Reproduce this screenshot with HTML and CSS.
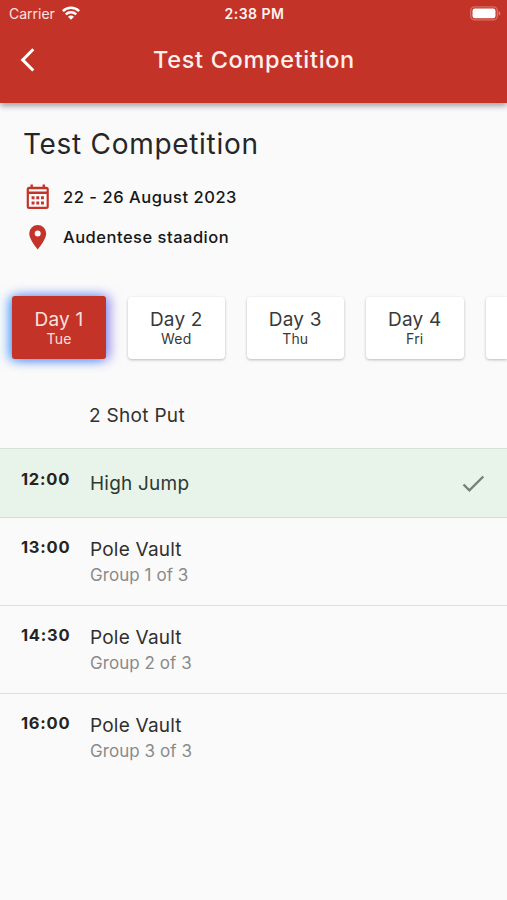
FILE: index.html
```html
<!DOCTYPE html>
<html lang="en">
<head>
<meta charset="utf-8">
<title>Test Competition</title>
<link rel="stylesheet" href="styles.css">
</head>
<body>
<header class="app-bar">
  <div class="status">
    <div class="carrier">
      <span>Carrier</span>
      <svg class="wifi" width="18" height="14" viewBox="0 0 18 14" fill="none" stroke="#fff" stroke-width="2.5">
        <path d="M.9 5.200a11.500 11.500 0 0 1 16.200 0"/>
        <path d="M3.800 8.400a7.500 7.500 0 0 1 10.400 0"/>
        <path d="M9 13.800 6 10.700a4.200 4.200 0 0 1 6 0z" fill="#fff" stroke="none"/>
      </svg>
    </div>
    <span class="clock">2:38 PM</span>
    <svg class="battery" width="31" height="15" viewBox="0 0 31 15">
      <rect x=".7" y=".9" width="26.600" height="13" rx="4" fill="none" stroke="#fff" stroke-opacity=".3" stroke-width="1.400"/>
      <rect x="2.500" y="2.600" width="23" height="9.600" rx="2.200" fill="#fff"/>
      <path d="M28.700 5v4.600c1-.4 1.600-1.300 1.600-2.300S29.700 5.400 28.700 5z" fill="#fff" fill-opacity=".4"/>
    </svg>
  </div>
  <div class="nav">
    <svg class="back" width="16" height="26" viewBox="0 0 16 26" fill="none" stroke="#fff" stroke-width="3"><path d="M14.300 2.300 3.700 12.900 14.300 23.500"/></svg>
    <h1 class="nav-title">Test Competition</h1>
  </div>
</header>
<main>
  <section class="info">
    <h2 class="title">Test Competition</h2>
    <div class="fact">
      <svg width="24" height="26" viewBox="0 0 24 26" fill="#c33329">
        <path fill-rule="evenodd" d="M4.500.5h2.400v2.300h9.700V.5H19v2.300h1.300a2.500 2.500 0 0 1 2.500 2.500v17.200a2.500 2.500 0 0 1-2.500 2.500H3.200a2.500 2.500 0 0 1-2.500-2.500V5.300a2.500 2.500 0 0 1 2.500-2.500h1.300zM2.900 5.200v2.400h17.700V5.200zM2.900 10v12.800h17.700V10z"/>
        <path d="M5.600 12.300h2.900v2.900H5.600zM10.300 12.300h2.900v2.900h-2.900zM15 12.300h2.900v2.900H15zM5.600 17.500h2.900v2.900H5.600zM10.300 17.500h2.900v2.900h-2.900zM15 17.500h2.900v2.900H15z"/>
      </svg>
      <span>22 - 26 August 2023</span>
    </div>
    <div class="fact place">
      <svg width="24" height="26" viewBox="0 0 24 26" fill="#c33329">
        <path fill-rule="evenodd" d="M11.700 1a8.500 8.500 0 0 0-8.500 8.500c0 6.100 8.500 15.900 8.500 15.900s8.500-9.800 8.500-15.900A8.500 8.500 0 0 0 11.700 1zm0 5.500a3 3 0 1 1 0 6 3 3 0 0 1 0-6z"/>
      </svg>
      <span>Audentese staadion</span>
    </div>
  </section>
  <nav class="days">
    <div class="day active"><b>Day 1</b><small>Tue</small></div>
    <div class="day"><b>Day 2</b><small>Wed</small></div>
    <div class="day"><b>Day 3</b><small>Thu</small></div>
    <div class="day"><b>Day 4</b><small>Fri</small></div>
    <div class="day next"></div>
  </nav>
  <section class="events">
    <div class="event first"><span class="time"></span><div class="name">2 Shot Put</div></div>
    <div class="event done">
      <span class="time">12:00</span><div class="name">High Jump</div>
      <svg class="check" width="23" height="18" viewBox="0 0 23 18" fill="none" stroke="#748078" stroke-width="2.400"><path d="M1.500 9.500 7.400 15.400 21.300 1.500"/></svg>
    </div>
    <div class="event"><span class="time">13:00</span><div class="name">Pole Vault<div class="group">Group 1 of 3</div></div></div>
    <div class="event"><span class="time">14:30</span><div class="name">Pole Vault<div class="group">Group 2 of 3</div></div></div>
    <div class="event"><span class="time">16:00</span><div class="name">Pole Vault<div class="group">Group 3 of 3</div></div></div>
  </section>
</main>
</body>
</html>
```
FILE: styles.css
```css
* { box-sizing: border-box; }
body { margin: 0; height: 900px; overflow: hidden; background: #fafafa; color: #303030; font-family: Inter, sans-serif; }
svg { display: block; flex: none; }
h1, h2 { margin: 0; }

.app-bar { height: 103px; background: #c33327; color: #fff; box-shadow: 0 3px 6px rgba(0,0,0,.36); }
.status { height: 28px; display: grid; grid-template-columns: 1fr auto 1fr; align-items: center; padding: 0 6px 0 9px; line-height: 28px; }
.carrier { display: flex; align-items: center; gap: 7px; font-size: 14px; color: #fbe3e0; }
.wifi { margin-top: -2px; }
.clock { margin-left: -1px; font-size: 14px; font-weight: 600; letter-spacing: .5px; color: #fff3f1; }
.battery { justify-self: end; margin-top: -1px; }
.nav { height: 64px; display: grid; grid-template-columns: 36px 1fr 36px; align-items: center; }
.back { margin-left: 19px; }
.nav-title { padding-left: 1px; text-align: center; font-size: 23.5px; font-weight: 500; letter-spacing: .68px; line-height: 62px; color: #fff0ee; }

.info { padding: 21px 23px 0; height: 181px; }
.title { font-size: 28px; font-weight: 400; letter-spacing: .7px; line-height: 41px; margin-bottom: 12px; color: #262626; }
.fact { display: flex; align-items: center; gap: 13px; height: 40px; padding-left: 3px; font-size: 16.5px; font-weight: 500; letter-spacing: .54px; color: #171717; }
.fact.place { letter-spacing: .5px; }

.days { display: flex; gap: 22px; padding: 13px 0 0 12px; }
.day { flex: none; width: 96.5px; height: 62px; display: flex; flex-direction: column; align-items: center; padding-top: 11px; border-radius: 4px; background: #fff; color: #393939; box-shadow: 0 1px 3px rgba(0,0,0,.26); }
.day b { font-size: 19px; font-weight: 400; letter-spacing: .2px; line-height: 23px; }
.day small { font-size: 14px; letter-spacing: .2px; line-height: 16px; }
.day:nth-child(n+3) { width: 97.5px; }
.day.active { width: 94px; height: 63px; margin-top: -1px; padding-top: 12px; border-radius: 3px; background: #c33327; color: #fbe0dd; box-shadow: -3px 1px 11px rgba(35,145,255,.8), 4px 0 12px rgba(125,80,225,.6); }
.day.next { flex: 1 1 0; width: auto; border-radius: 4px 0 0 4px; }

.events { padding-top: 22px; }
.event { display: flex; height: 88px; padding: 20px 22px 0 21px; border-top: 1px solid #dfdfdf; }
.time { width: 69px; margin-top: -1px; font-size: 16.5px; font-weight: 700; letter-spacing: .75px; line-height: 20px; color: #242424; }
.name { flex: 1; font-size: 19px; letter-spacing: .22px; line-height: 24px; }
.group { font-size: 17px; letter-spacing: .06px; line-height: 26px; color: #8a8a8a; }
.event.first { height: 67px; border: 0; padding-top: 23px; }
.event.first .time { width: 68px; }
.event.first .name { letter-spacing: .3px; }
.event.done { height: 69px; background: #e8f4ea; border-color: #d6dfd8; }
.event.done .time { margin-top: 0; }
.event.done .name { padding-top: 3px; color: #2d3a30; }
.check { margin-top: 6px; }
.event.done + .event { border-color: #d6ddd7; }
```
